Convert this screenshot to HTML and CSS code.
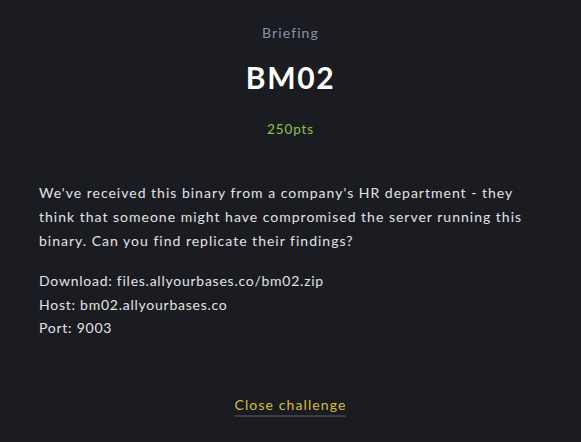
FILE: index.html
```html
<!DOCTYPE html>
<html lang="en">
<head>
<meta charset="utf-8">
<title>BM02</title>
<link rel="stylesheet" href="styles.css">
</head>
<body>
<main class="modal">
  <div class="kicker">Briefing</div>
  <h1 class="title">BM02</h1>
  <div class="points">250pts</div>
  <div class="desc">
    <p>We've received this binary from a company's HR department - they think that someone might have compromised the server running this binary. Can you find replicate their findings?</p>
    <p class="info">Download: files.allyourbases.co/bm02.zip<br>Host: bm02.allyourbases.co<br>Port: 9003</p>
  </div>
  <div class="actions"><a class="close" href="#">Close challenge</a></div>
</main>
</body>
</html>
```
FILE: styles.css
```css
html, body {
  margin: 0;
  padding: 0;
  background: #1b1c21;
  height: 100%;
}
body {
  font-family: "Lato", "Noto Sans", sans-serif;
  color: #e4e4e8;
}
.modal {
  display: flex;
  flex-direction: column;
  padding: 24px 39px 0;
}
.kicker {
  text-align: center;
  color: #8a90a6;
  font-size: 14px;
  letter-spacing: 1.1px;
  line-height: 18px;
}
.title {
  margin: 17px 0 0;
  text-align: center;
  font-size: 30px;
  font-weight: 700;
  color: #ffffff;
  letter-spacing: 1.6px;
  line-height: 36px;
}
.points {
  margin-top: 26px;
  text-align: center;
  color: #8bc34a;
  font-size: 13.5px;
  letter-spacing: 0.9px;
  line-height: 16px;
}
.desc {
  margin-top: 44px;
  font-size: 14px;
  letter-spacing: 1px;
  line-height: 24px;
  color: #e2e2e6;
}
.desc p {
  margin: 0 0 16px;
}
.desc .info {
  line-height: 23.5px;
  letter-spacing: 0.75px;
}
.actions {
  margin-top: 38px;
  text-align: center;
}
.close {
  display: inline-block;
  color: #d8be3c;
  text-decoration: none;
  font-size: 14px;
  letter-spacing: 1.1px;
  line-height: 18px;
  border-bottom: 2px solid #3b3d45;
  padding-bottom: 1px;
}
```
